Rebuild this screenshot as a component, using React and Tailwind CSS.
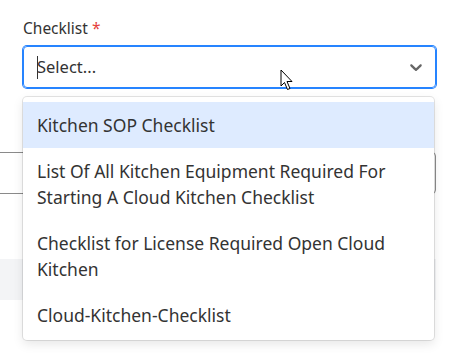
import { useState } from "react";

const options = [
  "Kitchen SOP Checklist",
  "List Of All Kitchen Equipment Required For Starting A Cloud Kitchen Checklist",
  "Checklist for License Required Open Cloud Kitchen",
  "Cloud-Kitchen-Checklist",
];

function Chevron() {
  return (
    <svg viewBox="0 0 20 20" width="20" height="20" fill="#666">
      <path d="M4.516 7.548c0.436-0.446 1.043-0.481 1.576 0l3.908 3.747 3.908-3.747c0.533-0.481 1.141-0.446 1.574 0 0.436 0.445 0.408 1.197 0 1.615-0.406 0.418-4.695 4.502-4.695 4.502-0.217 0.223-0.502 0.335-0.787 0.335s-0.57-0.112-0.789-0.335c0 0-4.287-4.084-4.695-4.502s-0.436-1.17 0-1.615z" />
    </svg>
  );
}

function Cursor() {
  return (
    <svg width="14" height="22" viewBox="0 0 14 22">
      <path
        d="M1 1 L1 17 L4.5 13.5 L7.5 20.5 L10 19.5 L7 12.5 L12 12.5 Z"
        fill="#fff"
        stroke="#000"
        strokeWidth="1"
        strokeLinejoin="round"
      />
    </svg>
  );
}

export default function App() {
  const [active] = useState(0);

  return (
    <div className="h-[353px] w-[456px] overflow-hidden bg-white font-['Noto_Sans',sans-serif] text-[#333]">
      <div className="pl-[23px] pr-[20px] pt-[18px]">
        <label className="block text-[15.5px] leading-[20px] text-[#333]">
          Checklist <span className="text-[#e53e3e]">*</span>
        </label>

        <div className="relative mt-[8px]">
          <div className="flex h-[42px] items-center rounded-[4px] border border-[#2684ff] shadow-[0_0_0_1px_#2684ff]">
            <div className="relative flex-1 pl-[13px] text-[16.5px] text-[#333]">
              <span className="absolute left-[13px] top-[1px] h-[23px] w-px bg-[#333]" />
              Select...
            </div>
            <div className="flex w-[40px] items-center justify-center pl-[2px]">
              <Chevron />
            </div>
          </div>

          <div className="absolute left-[257px] top-[23px]">
            <Cursor />
          </div>

          <div className="absolute left-0 right-[2px] top-[51px] z-10 rounded-[4px] bg-white pb-[2px] pt-[5px] shadow-[0_0_0_1px_rgba(0,0,0,0.1),0_4px_11px_rgba(0,0,0,0.1)]">
            {options.map((o, i) => (
              <div
                key={o}
                className={`py-[10px] pl-[14px] pr-[16px] text-[17.5px] leading-[26px] text-[#333] ${
                  i === active ? "bg-[#deebff]" : ""
                }`}
              >
                {o}
              </div>
            ))}
          </div>
        </div>

        <div className="-ml-[40px] mt-[64px] h-[42px] rounded-[4px] border border-[#8a8a8a]" />
        <div className="-ml-[40px] mt-[65px] h-[41px] bg-[#f3f4f6]" />
      </div>
    </div>
  );
}
